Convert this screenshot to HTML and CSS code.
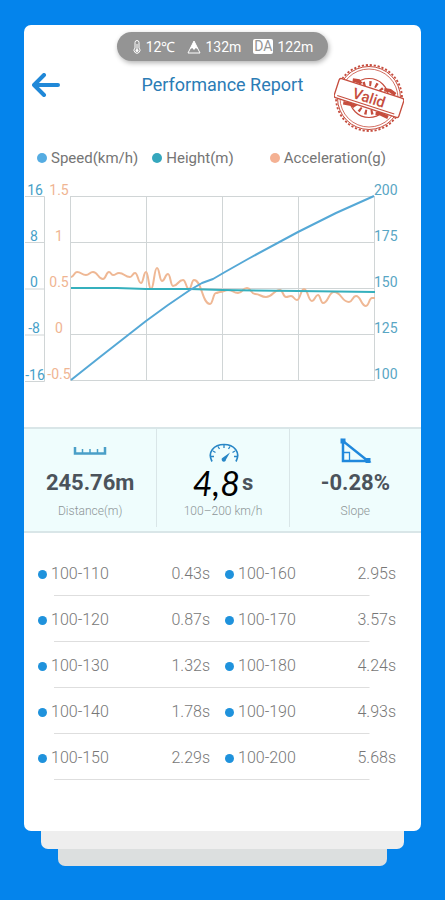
FILE: index.html
```html
<!DOCTYPE html>
<html lang="en">
<head>
<meta charset="utf-8">
<meta name="viewport" content="width=device-width, initial-scale=1">
<title>Performance Report</title>
<link rel="stylesheet" href="styles.css">
</head>
<body>
<main class="card">
  <div class="pill">
    <span class="pill-item">
      <svg class="thermo" viewBox="0 0 10 14" aria-hidden="true"><path d="M3 8V2.5a2 2 0 0 1 4 0V8a3 3 0 1 1-4 0z" fill="none" stroke="#fff"/><path d="M5 4v6" stroke="#fff"/><circle cx="5" cy="10.4" r="1.5" fill="#fff"/></svg>
      12℃
    </span>
    <span class="pill-item">
      <svg class="peak" viewBox="0 0 14 14" aria-hidden="true"><path d="M7 1 13 13H1z" fill="none" stroke="#fff" stroke-linejoin="round"/><path d="M7 1 11.400 9.500 8.800 8 7 10 5.200 8 2.600 9.500z" fill="#fff"/></svg>
      132m
    </span>
    <span class="pill-item"><span class="da">DA</span>122m</span>
  </div>

  <header class="header">
    <button class="back" type="button" aria-label="Back">
      <svg viewBox="0 0 28 24" aria-hidden="true"><path d="M12 2 2 12l10 10M2 12h24" fill="none" stroke="#2088d8" stroke-width="4" stroke-linecap="round" stroke-linejoin="round"/></svg>
    </button>
    <h1 class="title">Performance Report</h1>
    <svg class="stamp" viewBox="0 0 70 70" role="img" aria-label="Valid">
      <g fill="none" stroke="#c64d3e">
        <circle cx="35" cy="35" r="33" stroke-width="1.8" stroke-dasharray="2.2 1.8"/>
        <circle cx="35" cy="35" r="31.5" stroke-width="1"/>
        <circle cx="35" cy="35" r="29" stroke-width=".8"/>
        <circle cx="35" cy="35" r="19.500" stroke-width="1.2"/>
        <circle cx="35" cy="35" r="14.500" stroke-width="5" stroke-dasharray="2.2 4"/>
      </g>
      <g transform="rotate(18 35 35)">
        <path d="M14 23l6-1 3 2M47 22.500l6-1 6 2M12 47.500l8-1 4 1M46 47.500l5-1 8 1" fill="none" stroke="#c64d3e" stroke-width="3.500"/>
        <rect x="1" y="25" width="68" height="20" rx="2" fill="#fff" stroke="#c64d3e" stroke-width="1.4"/>
        <path d="M4 42.5h60" stroke="#c64d3e"/>
        <text class="stamp-text" x="35" y="40" text-anchor="middle">Valid</text>
      </g>
    </svg>
  </header>

  <ul class="legend">
    <li class="legend-item"><span class="dot speed"></span>Speed(km/h)</li>
    <li class="legend-item"><span class="dot height"></span>Height(m)</li>
    <li class="legend-item"><span class="dot accel"></span>Acceleration(g)</li>
  </ul>

  <svg class="chart" viewBox="24 180 397 206" role="img" aria-label="Speed, height and acceleration">
    <path class="grid" d="M70.5 196.5H374.5M70.5 242.5H374.5M70.5 288.5H374.5M70.5 334.5H374.5M70.5 380.5H374.5M70.5 196V381M146.500 196V381M222.500 196V381M298.500 196V381M374.500 196V381"/>
    <path class="grid" d="M25 196.500H44.500V381.500H25M25 242.500H44M25 289H44M25 335H44"/>
    <g class="axis height-axis" text-anchor="middle">
      <text x="35" y="195">16</text><text x="34" y="241">8</text><text x="34" y="287">0</text><text x="34" y="333">-8</text><text x="35" y="380">-16</text>
    </g>
    <g class="axis accel-axis" text-anchor="middle">
      <text x="59" y="195">1.5</text><text x="59" y="241">1</text><text x="59" y="287">0.5</text><text x="59" y="333">0</text><text x="59" y="379">-0.5</text>
    </g>
    <g class="axis speed-axis">
      <text x="374" y="195">200</text><text x="374" y="241">175</text><text x="374" y="287">150</text><text x="374" y="333">125</text><text x="374" y="379">100</text>
    </g>
    <path id="accel-line" class="line accel-line"/>
    <polyline class="line height-line" points="71,288 117,288 146,289 190,289 222,290 298,291 375,292"/>
    <polyline class="line speed-line" points="71,380 100,357 146,321 168,305 190,290 202,283 213,279 225,272 248,259 298,232 336,213 374,196"/>
  </svg>

  <section class="stats">
    <div class="stat">
      <svg class="stat-icon" viewBox="0 0 34 28" aria-hidden="true"><path d="M2 11v6.500h30V11" fill="none" stroke="#4a9fc8" stroke-width="2.500"/><path d="M9.500 13v4M17 13v4M24.500 13v4" stroke="#4a9fc8" stroke-width="1.500"/></svg>
      <strong class="value">245.76m</strong>
      <span class="label">Distance(m)</span>
    </div>
    <div class="stat">
      <svg class="stat-icon" viewBox="0 0 34 28" aria-hidden="true"><path d="M6 25.500C1 16 8 8.500 18 8.500s17 7.500 12 17" fill="none" stroke="#2886c6" stroke-width="1.700"/><path d="M18 9v3M12 10.500l1.500 2.500M24 10.500l-1.500 2.500M7 15l2.500 1.500M29 15l-2.500 1.500M5 20.500h3M31 20.500h-3" stroke="#2886c6" stroke-width="1.300"/><path d="M24 16.500 20 23.500a2.200 2.200 0 1 1-3-2z" fill="#2886c6"/></svg>
      <strong class="value timed"><span class="ink">4,8</span>s</strong>
      <span class="label">100–200 km/h</span>
    </div>
    <div class="stat">
      <svg class="stat-icon" viewBox="0 0 34 28" aria-hidden="true"><path d="M5 5v20h25z" fill="none" stroke="#2088dc" stroke-width="2.500"/><path d="M5 16.500h6.500V25" fill="none" stroke="#2088dc" stroke-width="1.300"/><path d="M2.500 2.500h5v5h-5zM27.500 22h5v5h-5z" fill="#2088dc"/></svg>
      <strong class="value">-0.28%</strong>
      <span class="label">Slope</span>
    </div>
  </section>

  <table class="splits">
    <tbody>
      <tr><th scope="row">100-110</th><td>0.43s</td><th scope="row">100-160</th><td>2.95s</td></tr>
      <tr><th scope="row">100-120</th><td>0.87s</td><th scope="row">100-170</th><td>3.57s</td></tr>
      <tr><th scope="row">100-130</th><td>1.32s</td><th scope="row">100-180</th><td>4.24s</td></tr>
      <tr><th scope="row">100-140</th><td>1.78s</td><th scope="row">100-190</th><td>4.93s</td></tr>
      <tr><th scope="row">100-150</th><td>2.29s</td><th scope="row">100-200</th><td>5.68s</td></tr>
    </tbody>
  </table>
</main>
<div class="sheet"></div>
<div class="sheet back-sheet"></div>
<script src="chart.js"></script>
</body>
</html>
```
FILE: styles.css
```css
* { box-sizing: border-box; }

body {
  margin: 0;
  min-height: 100vh;
  padding: 25px 24px 33px;
  background: #0484ec;
  font-family: Roboto, "Liberation Sans", sans-serif;
  color: #757575;
}

.card {
  display: flex;
  flex-direction: column;
  padding: 7px 0 51px;
  border-radius: 7px;
  background: #fff;
}

.pill {
  display: flex;
  align-items: center;
  align-self: center;
  gap: 12px;
  height: 29px;
  padding: 0 15px;
  border-radius: 15px;
  background: #949494;
  box-shadow: 1px 2px 5px rgba(0, 0, 0, 0.3);
  color: #fff;
  font-size: 14px;
}

.pill-item { display: flex; align-items: center; gap: 4px; }
.thermo { width: 10px; height: 14px; }
.peak { width: 14px; height: 14px; }

.da {
  padding: 0 1px;
  border-radius: 2px;
  background: #fff;
  color: #949494;
  line-height: 15px;
}

.header {
  display: grid;
  grid-template-columns: 80px 1fr 80px;
  align-items: start;
  height: 84px;
}

.back {
  margin: 12px 0 0 8px;
  padding: 0;
  width: 28px;
  height: 24px;
  border: 0;
  background: none;
}

.back svg { display: block; }

.title {
  margin: 12px 0 0;
  color: #2b7cb5;
  font-size: 18px;
  font-weight: 400;
  line-height: 24px;
  text-align: center;
  white-space: nowrap;
}

.stamp { width: 70px; height: 70px; margin-top: 2px; margin-left: -7px; }
.stamp-text { fill: #c64d3e; font-size: 15px; font-weight: 500; }

.legend {
  display: flex;
  margin: 0;
  padding: 0 13px;
  list-style: none;
  font-size: 15px;
  line-height: 26px;
  height: 35px;
}

.legend-item { display: flex; align-items: center; gap: 4px; height: 26px; margin-right: 14px; }
.legend-item:last-child { margin: 0 22px 0 auto; }
.dot { width: 10px; height: 10px; border-radius: 50%; }
.speed { background: #55ace2; }
.height { background: #35a7bd; }
.accel { background: #f4b193; }

.chart { display: block; width: 100%; }
.grid { fill: none; stroke: #d0d5d6; }
.axis { font-size: 14px; }
.height-axis { fill: #479fc8; }
.accel-axis { fill: #f0b592; }
.speed-axis { fill: #59a6c4; }
.line { fill: none; stroke-width: 2; stroke-linejoin: round; }
.accel-line { stroke: #efb895; }
.height-line { stroke: #35b0bd; }
.speed-line { stroke: #55a8d6; }

.stats {
  display: grid;
  grid-template-columns: repeat(3, 1fr);
  margin-top: 41px;
  padding-bottom: 4px;
  border: solid #d9e6e8;
  border-width: 2px 0;
  background: #effdfd;
}

.stat {
  display: flex;
  flex-direction: column;
  align-items: center;
  height: 98px;
  padding-top: 7px;
}

.stat + .stat { border-left: 1px solid #d9e6e8; }
.stat-icon { width: 34px; height: 28px; }

.value {
  height: 38px;
  color: #4b535b;
  font-size: 22px;
  font-weight: 700;
  line-height: 38px;
}

.timed { display: flex; align-items: center; gap: 2px; }
.ink { color: #000; font-family: Lato, sans-serif; font-size: 34px; font-style: italic; font-weight: 400; }
.label { color: #8d9597; font-size: 12px; font-weight: 300; line-height: 18px; }

.splits {
  width: calc(100% - 39px);
  margin: 17px 25px 0 14px;
  border-collapse: collapse;
  table-layout: fixed;
  color: #777;
  font-size: 16px;
}

.splits tr {
  height: 46px;
  background: linear-gradient(#dedede, #dedede) 16px 100% / calc(100% - 43px) 1px no-repeat;
}

.splits th, .splits td { padding: 0; font-weight: 300; }
.splits th { text-align: left; }
.splits td { text-align: right; }
.splits td:nth-child(2) { padding-right: 7px; }
.splits th:nth-child(3) { padding-left: 8px; }

.splits th::before {
  content: "";
  display: inline-block;
  width: 9px;
  height: 9px;
  margin-right: 4px;
  border-radius: 50%;
  background: #1f92dc;
}

.sheet {
  height: 18px;
  margin: 0 17px;
  border-radius: 0 0 7px 7px;
  background: #eee;
}

.back-sheet { height: 17px; margin: 0 34px; background: #dcdfdf; }
```
FILE: chart.js
```js
// Turning points of the acceleration trace, in chart units.
const accel = [
  [71, 277], [77, 272], [86, 275], [93, 272], [103, 279], [109, 272],
  [113, 275], [119, 273], [130, 277], [135, 273], [141, 283], [146, 272],
  [151, 289], [157, 268], [162, 281], [168, 274], [173, 286], [183, 280],
  [189, 289], [194, 280], [210, 304], [216, 293], [220, 292], [228, 290],
  [238, 293], [247, 288], [255, 294], [266, 297], [280, 290], [286, 297],
  [291, 296], [297, 300], [304, 289], [312, 301], [318, 295], [323, 303],
  [334, 292], [349, 302], [356, 296], [366, 306], [372, 298], [375, 298]
];

let d = `M${accel[0]}`;
for (let i = 1; i < accel.length; i++) {
  const [x0, y0] = accel[i - 1];
  const [x1, y1] = accel[i];
  const mid = (x0 + x1) / 2;
  d += `C${mid} ${y0} ${mid} ${y1} ${x1} ${y1}`;
}
document.getElementById("accel-line").setAttribute("d", d);
```
